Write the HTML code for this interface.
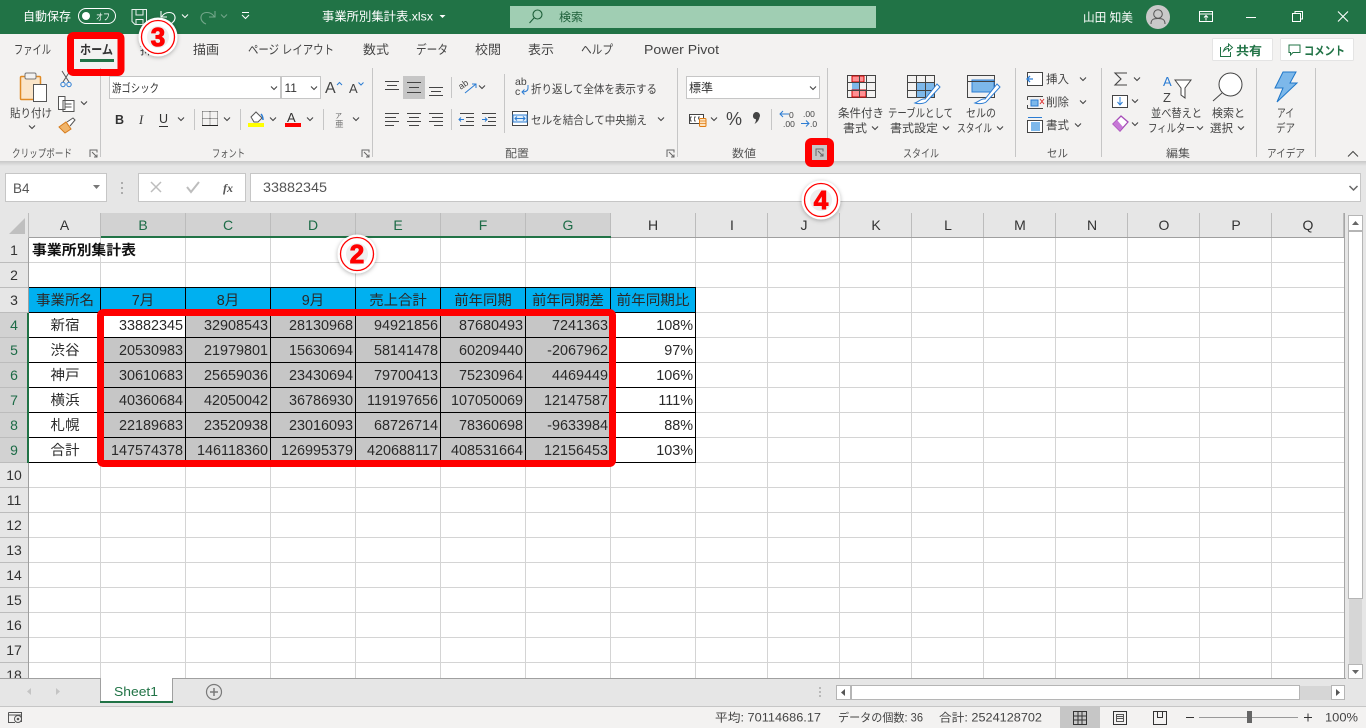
<!DOCTYPE html>
<html lang="ja"><head><meta charset="utf-8"><title>事業所別集計表.xlsx</title>
<style>
html,body{margin:0;padding:0;background:#fff;overflow:hidden;width:1366px;height:728px}
svg{display:block}
text{font-family:"Liberation Sans","Noto Sans CJK JP",sans-serif;fill:#444}
.t{font-size:12px;fill:#fff}
.tab{font-size:12.5px;fill:#444}
.r{font-size:11.5px;fill:#444}
.g{font-size:11px;fill:#555}
.ch{font-size:14px;text-anchor:middle;fill:#333}
.cs{font-size:14px;text-anchor:middle;fill:#1c6b46}
.n{font-size:14.4px;text-anchor:end;fill:#2a2a2a}
.j{font-size:14.4px;text-anchor:middle;fill:#2a2a2a}
.st{font-size:11.5px;fill:#444}
.ann{font-size:26px;font-weight:bold;text-anchor:middle;fill:#f00;stroke:#f00;stroke-width:1}
</style></head><body>
<svg width="1366" height="728" viewBox="0 0 1366 728" xmlns="http://www.w3.org/2000/svg">
<defs>
<path id="chev" d="M-3-1.5L0 1.5L3-1.5" fill="none" stroke="#444" stroke-width="1.1"/>
<g id="lau" fill="none" stroke="#666" stroke-width="1"><path d="M-3.5 3.5V-3.5H3.5V-1M0.5 3.5H3.5V1M-1.5-1.5L3 3"/></g>
<filter id="sh" x="-40%" y="-40%" width="180%" height="180%"><feDropShadow dx="0" dy="1" stdDeviation="2" flood-color="#000" flood-opacity=".3"/></filter>
<linearGradient id="rs" x1="0" y1="0" x2="0" y2="1"><stop offset="0" stop-color="#c8c8c8"/><stop offset="1" stop-color="#e6e6e6"/></linearGradient>
<g id="annc"><circle r="19.5" fill="#fff" filter="url(#sh)"/><circle r="16.5" fill="#fff" stroke="#f00" stroke-width="1.3"/><circle r="11" fill="#eee"/></g>
</defs>

<!-- backgrounds -->
<rect width="1366" height="728" fill="#fff"/>
<rect width="1366" height="34" fill="#217346"/>
<rect y="34" width="1366" height="127" fill="#f3f2f1"/>
<rect y="161" width="1366" height="52" fill="#e6e6e6"/>
<rect y="161" width="1366" height="5" fill="url(#rs)"/>

<!-- title bar -->
<text class="t" x="23" y="20.5" textLength="48" lengthAdjust="spacingAndGlyphs">自動保存</text>
<rect x="78.5" y="8.5" width="37" height="15" rx="7.5" fill="none" stroke="#fff"/>
<circle cx="86" cy="16" r="4" fill="#fff"/>
<text x="96" y="20" style="font-size:9px;fill:#fff" textLength="14" lengthAdjust="spacingAndGlyphs">オフ</text>
<path d="M132 9.5H146.500V24.500H135L132 21.500ZM136 9.500V15H143V9.500M136 24.500V19.500H143V24.500" fill="none" stroke="#fff" opacity=".9"/>
<path d="M161 11V17H167M161.500 17C165 11 174 11 175 17C175.500 20 173 23 170 24" fill="none" stroke="#fff" stroke-width="1.100"/>
<path d="M182 14.500L185 17.500L188 14.500" fill="none" stroke="#fff"/>
<path d="M215 11V17H209M214.500 17C211 11 202 11 201 17C200.500 20 203 23 206 24" fill="none" stroke="#74a78b" stroke-width="1.100"/>
<path d="M221 14.500L224 17.500L227 14.500" fill="none" stroke="#74a78b"/>
<path d="M242 12.500H249M242 15L245.500 18.500L249 15" fill="none" stroke="#fff"/>
<text class="t" x="322" y="20.500" textLength="111" lengthAdjust="spacingAndGlyphs">事業所別集計表.xlsx</text>
<path d="M439.500 15H445.500L442.500 18Z" fill="#fff"/>
<rect x="510" y="6" width="366" height="22" fill="#a0ceb3"/>
<circle cx="537.500" cy="14.500" r="4.500" fill="none" stroke="#1d5f39" stroke-width="1.100"/>
<path d="M534 18L529.500 23" stroke="#1d5f39" stroke-width="1.100"/>
<text x="559" y="21" style="font-size:11.500px;fill:#1d5f39" textLength="24" lengthAdjust="spacingAndGlyphs">検索</text>
<text class="t" x="1083" y="21.500" textLength="50" lengthAdjust="spacingAndGlyphs">山田 知美</text>
<circle cx="1158" cy="17" r="12" fill="#c9c9c9"/>
<circle cx="1158" cy="14" r="4.300" fill="none" stroke="#555"/><path d="M1151 24C1151 19 1154 18.500 1158 18.500S1165 19 1165 24" fill="none" stroke="#555"/>
<path d="M1199.500 11.500H1212.500V21.500H1199.500ZM1199.500 14H1212.500M1206 20.500V15.500M1204 17.500L1206 15.500L1208 17.500" fill="none" stroke="#fff"/>
<path d="M1246 17.500H1256" stroke="#fff"/>
<path d="M1292.500 13.500H1300.500V21.500H1292.500ZM1295 13.500V11.500H1302.500V19H1300.500" fill="none" stroke="#fff"/>
<path d="M1338 11.500L1348 21.500M1348 11.500L1338 21.500" stroke="#fff" stroke-width="1.100"/>

<!-- tabs -->
<text class="tab" x="14" y="54" textLength="37" lengthAdjust="spacingAndGlyphs">ファイル</text>
<text class="tab" x="80" y="54" textLength="33" lengthAdjust="spacingAndGlyphs" style="font-weight:bold;fill:#333">ホーム</text>
<rect x="80" y="59" width="34" height="3" fill="#217346"/>
<text class="tab" x="140" y="54" textLength="26" lengthAdjust="spacingAndGlyphs">挿入</text>
<text class="tab" x="193" y="54" textLength="26" lengthAdjust="spacingAndGlyphs">描画</text>
<text class="tab" x="248" y="54" textLength="86" lengthAdjust="spacingAndGlyphs">ページ レイアウト</text>
<text class="tab" x="363" y="54" textLength="26" lengthAdjust="spacingAndGlyphs">数式</text>
<text class="tab" x="416" y="54" textLength="32" lengthAdjust="spacingAndGlyphs">データ</text>
<text class="tab" x="475" y="54" textLength="26" lengthAdjust="spacingAndGlyphs">校閲</text>
<text class="tab" x="528" y="54" textLength="26" lengthAdjust="spacingAndGlyphs">表示</text>
<text class="tab" x="581" y="54" textLength="32" lengthAdjust="spacingAndGlyphs">ヘルプ</text>
<text class="tab" x="644" y="54" textLength="75" lengthAdjust="spacingAndGlyphs">Power Pivot</text>
<rect x="1212.500" y="38.500" width="60" height="22" rx="1" fill="#fff" stroke="#e4e4e4"/>
<path d="M1220.500 47V56.500H1230.500V52M1223.500 51C1224.500 47.500 1226.500 46.500 1228.500 46.500V44L1232.500 47.500L1228.500 51V48.500C1226.500 48.500 1225 49.500 1223.500 51Z" fill="none" stroke="#217346"/>
<text x="1236" y="55" style="font-size:12px;font-weight:bold;fill:#217346" textLength="26" lengthAdjust="spacingAndGlyphs">共有</text>
<rect x="1280.500" y="38.500" width="73" height="22" rx="1" fill="#fff" stroke="#e4e4e4"/>
<path d="M1289 45H1300V52.500H1293L1290.500 55V52.500H1289Z" fill="none" stroke="#217346"/>
<text x="1304" y="55" style="font-size:12px;font-weight:bold;fill:#217346" textLength="41" lengthAdjust="spacingAndGlyphs">コメント</text>

<!-- group separators -->
<g stroke="#c6c6c6" shape-rendering="crispEdges">
<path d="M100.500 68V157M372.500 68V157M677.500 68V157M827.500 68V157M1015.500 68V157M1101.500 68V157M1256.500 68V157M1315.500 68V157"/>
<path d="M194.500 109V130M240.500 109V130M323.500 109V130M451.500 77V98M451.500 109V130M504.500 74V133M771.500 109V130"/>
</g>

<!-- clipboard -->
<rect x="20.500" y="76.500" width="20" height="23" rx="1" fill="#fbe5c8" stroke="#e08a24" stroke-width="1.500"/>
<rect x="25" y="73" width="11" height="6" rx="1.500" fill="#f3f2f1" stroke="#777"/>
<rect x="33.500" y="84.500" width="13" height="17" fill="#fff" stroke="#555"/>
<text class="r" x="10" y="117" textLength="42" lengthAdjust="spacingAndGlyphs">貼り付け</text>
<use href="#chev" x="32" y="127"/>
<path d="M62 71L69 82M70 71L63 82" stroke="#555" fill="none"/><circle cx="63" cy="84.500" r="2.200" fill="none" stroke="#2b7cd3"/><circle cx="69" cy="84.500" r="2.200" fill="none" stroke="#2b7cd3"/>
<path d="M58.500 96.500H65V109.500H58.500ZM63 100.500H74V111.500H63Z" fill="#fff" stroke="#555"/><path d="M65.500 104H71.500M65.500 107H71.500" stroke="#555"/>
<use href="#chev" x="84" y="103"/>
<path d="M59 127L66 122L71 129L65 133Z" fill="#f0b46a" stroke="#d67b1b"/><path d="M67 122L73 118L75 120L70 126" fill="#fff" stroke="#555"/>
<text class="g" x="12" y="157" textLength="60" lengthAdjust="spacingAndGlyphs">クリップボード</text>
<use href="#lau" x="93.500" y="153.500"/>

<!-- font -->
<rect x="109.500" y="76.500" width="171" height="22" fill="#fff" stroke="#c6c6c6"/>
<rect x="281.500" y="76.500" width="39" height="22" fill="#fff" stroke="#c6c6c6"/>
<text x="112" y="92" style="font-size:11.500px;fill:#333" textLength="47" lengthAdjust="spacingAndGlyphs">游ゴシック</text>
<text x="284.500" y="92" style="font-size:12px;fill:#333">11</text>
<use href="#chev" x="274" y="88"/><use href="#chev" x="314" y="88"/>
<text x="325" y="93" style="font-size:16px;fill:#444">A</text><path d="M337 85L339.500 82.500L342 85" fill="none" stroke="#2b7cd3"/>
<text x="349" y="93" style="font-size:13px;fill:#444">A</text><path d="M358.500 82.500L361 85L363.500 82.500" fill="none" stroke="#2b7cd3"/>
<text x="115" y="124" style="font-size:12.500px;font-weight:bold;fill:#333">B</text>
<text x="139" y="124" style="font-size:12.500px;font-style:italic;fill:#333;font-family:'Liberation Serif',serif">I</text>
<text x="159" y="123" style="font-size:12.500px;fill:#333">U</text><path d="M159 126.500H168" stroke="#333"/>
<use href="#chev" x="181" y="119"/>
<path d="M202.500 111.500H217.500M202.500 125.500H217.500M202.500 111.500V125.500M217.500 111.500V125.500M210 111.500V125.500M202.500 118.500H217.500" stroke="#555" stroke-dasharray="1 1" fill="none"/><path d="M202 125.500H218" stroke="#222"/>
<use href="#chev" x="227" y="119"/>
<path d="M251 117L256 112L262 118L258 122H254Z" fill="#fff" stroke="#555"/><path d="M261 114C263 116 263 118 263 120" stroke="#2b7cd3" fill="none" stroke-width="1.500"/>
<rect x="248" y="123" width="16" height="4" fill="#ff0"/>
<use href="#chev" x="273" y="119"/>
<text x="287" y="122" style="font-size:13px;fill:#333">A</text>
<rect x="285" y="123" width="16" height="4" fill="#f00"/>
<use href="#chev" x="310" y="119"/>
<text x="335" y="118" style="font-size:7px;fill:#666">ア</text><text x="335" y="127" style="font-size:8.500px;fill:#777">亜</text>
<use href="#chev" x="356" y="119"/>
<text class="g" x="212" y="157" textLength="33" lengthAdjust="spacingAndGlyphs">フォント</text>
<use href="#lau" x="365.500" y="153.500"/>

<!-- alignment -->
<rect x="403" y="76" width="22" height="23" fill="#c6c6c6"/>
<g stroke="#444" shape-rendering="crispEdges">
<path d="M385 81.500H399M387 85.500H397M385 89.500H399" />
<path d="M407 82.500H421M409 87.500H419M407 92.500H421"/>
<path d="M429 87.500H443M431 91.500H441M429 95.500H443"/>
<path d="M385 113.500H399M385 117.500H396M385 121.500H399M385 125.500H394"/>
<path d="M407 113.500H421M409 117.500H419M407 121.500H421M409 125.500H419"/>
<path d="M429 113.500H443M432 117.500H443M429 121.500H443M434 125.500H443"/>
<path d="M460 113.500H474M466 117.500H474M466 121.500H474M460 125.500H474"/>
<path d="M482 113.500H496M488 117.500H496M488 121.500H496M482 125.500H496"/>
</g>
<path d="M464 119.500H459M461 117.500L459 119.500L461 121.500M482 119.500H487M485 117.500L487 119.500L485 121.500" fill="none" stroke="#2b7cd3"/>
<text x="459" y="88" style="font-size:9px;fill:#444" transform="rotate(-35 463 86)">ab</text>
<path d="M465 93L476 84M472 84H476V88" fill="none" stroke="#2b7cd3"/>
<use href="#chev" x="482" y="87"/>
<text x="515" y="85" style="font-size:10.500px;fill:#444">ab</text><text x="515" y="95" style="font-size:10.500px;fill:#444">c</text>
<path d="M528 85V88C528 91 525 92 522 92M524.500 89.500L522 92L524.500 94.500" fill="none" stroke="#2b7cd3"/>
<text class="r" x="531" y="93" textLength="126" lengthAdjust="spacingAndGlyphs">折り返して全体を表示する</text>
<rect x="512.500" y="111.500" width="15" height="14" fill="#fff" stroke="#444"/><rect x="513" y="115" width="14" height="7" fill="#e0eefa" stroke="#2b7cd3"/>
<path d="M515 118.500H525M517 116.500L515 118.500L517 120.500M523 116.500L525 118.500L523 120.500" fill="none" stroke="#2b7cd3"/>
<text class="r" x="531" y="124" textLength="116" lengthAdjust="spacingAndGlyphs">セルを結合して中央揃え</text>
<use href="#chev" x="661" y="119"/>
<text class="g" x="505" y="157" textLength="24" lengthAdjust="spacingAndGlyphs">配置</text>
<use href="#lau" x="670.500" y="153.500"/>

<!-- number -->
<rect x="686.500" y="76.500" width="133" height="22" fill="#fff" stroke="#c6c6c6"/>
<text x="689" y="92" style="font-size:12px;fill:#333" textLength="24" lengthAdjust="spacingAndGlyphs">標準</text>
<use href="#chev" x="813" y="88"/>
<rect x="689.500" y="114.500" width="14" height="9" fill="#fff" stroke="#444"/>
<path d="M692 117H690.500V121H692M696 117H694.500V121H696M700 117H698.500V119H700" fill="none" stroke="#444" stroke-width=".8"/>
<rect x="699.500" y="118.500" width="6.500" height="8" rx="1" fill="#fde3c0" stroke="#e07c12"/>
<path d="M700 121H706M700 123.500H706" stroke="#e07c12" stroke-width=".8"/>
<use href="#chev" x="714" y="119"/>
<text x="726" y="125" style="font-size:18px;fill:#444">%</text>
<path d="M753 115.500a3.500 3.500 0 1 1 6.500 1.800c-.4 2.800-2.400 5.400-5 6.700c1-1.700 1.500-3.200 1.500-4.800c-2 0-3.300-1.700-3-3.700z" fill="#444"/>
<path d="M780 114H789M783 111L780 114L783 117" fill="none" stroke="#2b7cd3"/>
<text x="789" y="118" style="font-size:8.500px;fill:#444">0</text><text x="783" y="127" style="font-size:8.500px;fill:#444">.00</text>
<text x="803" y="117" style="font-size:8.500px;fill:#444">.00</text><text x="810" y="127" style="font-size:8.500px;fill:#444">.0</text>
<path d="M801 123.500H809M806 120.500L809 123.500L806 126.500" fill="none" stroke="#2b7cd3"/>
<text class="g" x="732" y="157" textLength="24" lengthAdjust="spacingAndGlyphs">数値</text>

<!-- styles -->
<g fill="none" stroke="#444" shape-rendering="crispEdges">
<rect x="847.500" y="75.500" width="28" height="22"/>
<rect x="907.500" y="75.500" width="27" height="22"/>
<rect x="967.500" y="75.500" width="27" height="22"/>
</g>
<rect x="852" y="76" width="12" height="6" fill="#ff8f92" stroke="#c00"/><rect x="852" y="83" width="7" height="7" fill="#7db8ea"/>
<rect x="852" y="90" width="14" height="7" fill="#ff8f92" stroke="#c00"/>
<path d="M847 82.500H875M847 90.500H875M859.500 76V97M866.500 76V97" stroke="#444" fill="none"/>
<rect x="916" y="83" width="18" height="14" fill="#7db8ea"/>
<path d="M907 82.500H935M907 90.500H935M916.500 76V97M925.500 76V97" stroke="#444" fill="none"/>
<path d="M937 84L925 99C922 98 918 102 915 103C918 104 925 104 927 101L940 87Z" fill="#fff" stroke="#2b7cd3"/>
<rect x="972" y="80" width="22" height="12" fill="#7db8ea" stroke="#2b7cd3"/>
<path d="M967 81.500H995" stroke="#444"/>
<path d="M997 84L985 99C982 98 978 102 975 103C978 104 985 104 987 101L1000 87Z" fill="#fff" stroke="#2b7cd3"/>
<text class="r" x="838" y="117" textLength="46" lengthAdjust="spacingAndGlyphs">条件付き</text>
<text class="r" x="843" y="132" textLength="24" lengthAdjust="spacingAndGlyphs">書式</text><use href="#chev" x="875" y="128"/>
<text class="r" x="888" y="117" textLength="65" lengthAdjust="spacingAndGlyphs">テーブルとして</text>
<text class="r" x="890" y="132" textLength="48" lengthAdjust="spacingAndGlyphs">書式設定</text><use href="#chev" x="946" y="128"/>
<text class="r" x="966" y="117" textLength="30" lengthAdjust="spacingAndGlyphs">セルの</text>
<text class="r" x="957" y="132" textLength="35" lengthAdjust="spacingAndGlyphs">スタイル</text><use href="#chev" x="1000" y="128"/>
<text class="g" x="903" y="157" textLength="36" lengthAdjust="spacingAndGlyphs">スタイル</text>

<!-- cells -->
<rect x="1027.500" y="72.500" width="15" height="13" fill="#fff" stroke="#444"/><path d="M1033 79H1027M1030 76L1027 79L1030 82" stroke="#2b7cd3" fill="none" stroke-width="1.300"/>
<text class="r" x="1046" y="83" textLength="23" lengthAdjust="spacingAndGlyphs">挿入</text><use href="#chev" x="1083" y="79"/>
<path d="M1027.500 96.500H1043M1027.500 108.500H1043M1027.500 96.500V100M1027.500 105V108.500" fill="none" stroke="#444"/><rect x="1031" y="100" width="7" height="6" fill="#7db8ea" stroke="#2b7cd3"/><path d="M1040 99L1044 104M1044 99L1040 104" stroke="#e03030"/>
<text class="r" x="1046" y="106" textLength="23" lengthAdjust="spacingAndGlyphs">削除</text><use href="#chev" x="1083" y="102"/>
<rect x="1027.500" y="120.500" width="15" height="12" fill="#fff" stroke="#444"/><rect x="1031" y="122" width="9" height="9" fill="#7db8ea"/><path d="M1028 117.500H1042" stroke="#2b7cd3"/>
<text class="r" x="1046" y="129" textLength="23" lengthAdjust="spacingAndGlyphs">書式</text><use href="#chev" x="1078" y="125"/>
<text class="g" x="1047" y="157" textLength="21" lengthAdjust="spacingAndGlyphs">セル</text>

<!-- edit -->
<path d="M1127 73H1115L1121 79L1115 85H1127" fill="none" stroke="#444" stroke-width="1.100"/><use href="#chev" x="1137" y="79"/>
<rect x="1112.500" y="95.500" width="15" height="12" fill="#fff" stroke="#444"/><path d="M1120 97V104M1117.500 102L1120 105L1122.500 102" fill="none" stroke="#2b7cd3"/><use href="#chev" x="1135" y="101"/>
<path d="M1113 124L1121 116L1128 122L1120 131Z" fill="#fff" stroke="#a64cb8" stroke-width="1.300"/><path d="M1113 124L1117 120L1123 127L1120 131Z" fill="#c678d6"/><use href="#chev" x="1135" y="124"/>
<text x="1163" y="86" style="font-size:13px;fill:#2b7cd3">A</text><text x="1163" y="102" style="font-size:13px;fill:#444">Z</text>
<path d="M1175 80H1191L1185 88V98L1181 95V88Z" fill="#fff" stroke="#444"/>
<text class="r" x="1151" y="117" textLength="51" lengthAdjust="spacingAndGlyphs">並べ替えと</text>
<text class="r" x="1148" y="132" textLength="47" lengthAdjust="spacingAndGlyphs">フィルター</text><use href="#chev" x="1200" y="128"/>
<circle cx="1230.500" cy="84.500" r="11.500" fill="#fff" stroke="#444"/><path d="M1222 93L1213 101" stroke="#444"/>
<text class="r" x="1212" y="117" textLength="33" lengthAdjust="spacingAndGlyphs">検索と</text>
<text class="r" x="1210" y="132" textLength="23" lengthAdjust="spacingAndGlyphs">選択</text><use href="#chev" x="1241" y="128"/>
<text class="g" x="1166" y="157" textLength="24" lengthAdjust="spacingAndGlyphs">編集</text>

<!-- ideas -->
<path d="M1283 72H1296L1290 83H1297L1277 102L1283 88H1275Z" fill="#7db8ea" stroke="#1f77c9"/>
<text class="r" x="1277" y="117" textLength="17" lengthAdjust="spacingAndGlyphs">アイ</text>
<text class="r" x="1276" y="132" textLength="19" lengthAdjust="spacingAndGlyphs">デア</text>
<text class="g" x="1267" y="157" textLength="38" lengthAdjust="spacingAndGlyphs">アイデア</text>
<path d="M1348 156.500L1353 151.500L1358 156.500" fill="none" stroke="#444"/>

<!-- formula bar -->
<rect x="5.500" y="173.500" width="101" height="28" fill="#fff" stroke="#c6c6c6"/>
<text x="13" y="193" style="font-size:13.500px;fill:#555">B4</text>
<path d="M93 185H100L96.500 189Z" fill="#777"/>
<path d="M122 182v2M122 187v2M122 192v2" stroke="#999" stroke-width="1.500"/>
<rect x="138.500" y="173.500" width="107" height="28" fill="#fff" stroke="#c6c6c6"/>
<path d="M151 182L161 192M161 182L151 192" stroke="#bdbdbd" stroke-width="1.500"/>
<path d="M187 187L191 192L199 182" fill="none" stroke="#bdbdbd" stroke-width="2"/>
<text x="223" y="192" style="font-size:12px;font-style:italic;font-weight:bold;fill:#555;font-family:'Liberation Serif',serif">fx</text>
<rect x="250.500" y="173.500" width="1110" height="28" fill="#fff" stroke="#c6c6c6"/>
<text x="263" y="192" style="font-size:13.500px;fill:#555" textLength="64" lengthAdjust="spacingAndGlyphs">33882345</text>
<path d="M1349.500 186L1353.500 190L1357.500 186" fill="none" stroke="#666" stroke-width="1.500"/>

<!-- grid headers -->
<rect y="213" width="1345" height="25" fill="#e6e6e6"/>
<rect y="238" width="28" height="441" fill="#e6e6e6"/>
<path d="M25 218V234H9Z" fill="#bfbfbf"/>
<rect x="101" y="213" width="510" height="24" fill="#d2d2d2"/>
<rect y="313" width="28" height="150" fill="#d2d2d2"/>
<g shape-rendering="crispEdges" fill="none">
<path d="M28.500 213V238M100.500 213V237M185.500 213V237M270.500 213V237M355.500 213V237M440.500 213V237M525.500 213V237M610.500 213V237M695.500 213V237M767.500 213V237M839.500 213V237M911.500 213V237M983.500 213V237M1055.500 213V237M1127.500 213V237M1199.500 213V237M1271.500 213V237M1343.500 213V237" stroke="#bcbcbc"/>
<path d="M0 262.500H28M0 287.500H28M0 312.500H28M0 337.500H28M0 362.500H28M0 387.500H28M0 412.500H28M0 437.500H28M0 462.500H28M0 487.500H28M0 512.500H28M0 537.500H28M0 562.500H28M0 587.500H28M0 612.500H28M0 637.500H28M0 662.500H28" stroke="#bcbcbc"/>
<path d="M28.500 238V678" stroke="#9f9f9f"/>
<path d="M29 237.500H1344" stroke="#9f9f9f"/>
<!-- gridlines -->
<path d="M100.500 238V679M185.500 238V679M270.500 238V679M355.500 238V679M440.500 238V679M525.500 238V679M610.500 238V679M695.500 238V679M767.500 238V679M839.500 238V679M911.500 238V679M983.500 238V679M1055.500 238V679M1127.500 238V679M1199.500 238V679M1271.500 238V679" stroke="#d4d4d4"/>
<path d="M29 262.500H1344M29 287.500H1344M29 312.500H1344M29 337.500H1344M29 362.500H1344M29 387.500H1344M29 412.500H1344M29 437.500H1344M29 462.500H1344M29 487.500H1344M29 512.500H1344M29 537.500H1344M29 562.500H1344M29 587.500H1344M29 612.500H1344M29 637.500H1344M29 662.500H1344" stroke="#d4d4d4"/>
<path d="M1344.500 213V679" stroke="#a6a6a6"/>
</g>
<!-- column labels -->
<text class="ch" x="64.500" y="230">A</text><text class="cs" x="143" y="230">B</text><text class="cs" x="228" y="230">C</text><text class="cs" x="313" y="230">D</text><text class="cs" x="398" y="230">E</text><text class="cs" x="483" y="230">F</text><text class="cs" x="568" y="230">G</text><text class="ch" x="653" y="230">H</text><text class="ch" x="732" y="230">I</text><text class="ch" x="804" y="230">J</text><text class="ch" x="876" y="230">K</text><text class="ch" x="948" y="230">L</text><text class="ch" x="1020" y="230">M</text><text class="ch" x="1092" y="230">N</text><text class="ch" x="1164" y="230">O</text><text class="ch" x="1236" y="230">P</text><text class="ch" x="1308" y="230">Q</text>
<!-- row labels -->
<text class="ch" x="14" y="255">1</text><text class="ch" x="14" y="280">2</text><text class="ch" x="14" y="305">3</text><text class="cs" x="14" y="330">4</text><text class="cs" x="14" y="355">5</text><text class="cs" x="14" y="380">6</text><text class="cs" x="14" y="405">7</text><text class="cs" x="14" y="430">8</text><text class="cs" x="14" y="455">9</text><text class="ch" x="14" y="480">10</text><text class="ch" x="14" y="505">11</text><text class="ch" x="14" y="530">12</text><text class="ch" x="14" y="555">13</text><text class="ch" x="14" y="580">14</text><text class="ch" x="14" y="605">15</text><text class="ch" x="14" y="630">16</text><text class="ch" x="14" y="655">17</text><text class="ch" x="14" y="680">18</text>

<!-- table -->
<rect x="29" y="288" width="667" height="25" fill="#00b0f0"/>
<rect x="101" y="313" width="510" height="150" fill="#c6c6c6"/>
<rect x="101" y="313" width="84" height="24" fill="#fff"/>
<g shape-rendering="crispEdges" fill="none">
<path d="M29 287.500H696M29 312.500H696M29 337.500H696M29 362.500H696M29 387.500H696M29 412.500H696M29 437.500H696M29 462.500H696M100.500 288V462M185.500 288V462M270.500 288V462M355.500 288V462M440.500 288V462M525.500 288V462M610.500 288V462M695.500 287V463" stroke="#000"/>
<path d="M28.500 313V463" stroke="#217346" stroke-width="1"/><path d="M27.500 313V463" stroke="#217346"/>
<path d="M101 236.500H611M101 237.500H611" stroke="#217346"/>
</g>
<text x="32" y="255" style="font-size:14.400px;font-weight:bold;fill:#111" textLength="104" lengthAdjust="spacingAndGlyphs">事業所別集計表</text>
<text class="j" x="65" y="305" textLength="58" lengthAdjust="spacingAndGlyphs">事業所名</text><text class="j" x="143" y="305">7月</text><text class="j" x="228" y="305">8月</text><text class="j" x="313" y="305">9月</text><text class="j" x="398" y="305">売上合計</text><text class="j" x="483" y="305">前年同期</text><text class="j" x="568" y="305">前年同期差</text><text class="j" x="653" y="305" textLength="73" lengthAdjust="spacingAndGlyphs">前年同期比</text>
<text class="j" x="65" y="330" textLength="29">新宿</text><text class="j" x="65" y="355" textLength="29">渋谷</text><text class="j" x="65" y="380" textLength="29">神戸</text><text class="j" x="65" y="405" textLength="29">横浜</text><text class="j" x="65" y="430" textLength="29">札幌</text><text class="j" x="65" y="455" textLength="29">合計</text>

<text class="n" x="183" y="330">33882345</text><text class="n" x="268" y="330">32908543</text><text class="n" x="353" y="330">28130968</text><text class="n" x="438" y="330">94921856</text><text class="n" x="523" y="330">87680493</text><text class="n" x="608" y="330">7241363</text><text class="n" x="693" y="330">108%</text>
<text class="n" x="183" y="355">20530983</text><text class="n" x="268" y="355">21979801</text><text class="n" x="353" y="355">15630694</text><text class="n" x="438" y="355">58141478</text><text class="n" x="523" y="355">60209440</text><text class="n" x="608" y="355">-2067962</text><text class="n" x="693" y="355">97%</text>
<text class="n" x="183" y="380">30610683</text><text class="n" x="268" y="380">25659036</text><text class="n" x="353" y="380">23430694</text><text class="n" x="438" y="380">79700413</text><text class="n" x="523" y="380">75230964</text><text class="n" x="608" y="380">4469449</text><text class="n" x="693" y="380">106%</text>
<text class="n" x="183" y="405">40360684</text><text class="n" x="268" y="405">42050042</text><text class="n" x="353" y="405">36786930</text><text class="n" x="438" y="405">119197656</text><text class="n" x="523" y="405">107050069</text><text class="n" x="608" y="405">12147587</text><text class="n" x="693" y="405">111%</text>
<text class="n" x="183" y="430">22189683</text><text class="n" x="268" y="430">23520938</text><text class="n" x="353" y="430">23016093</text><text class="n" x="438" y="430">68726714</text><text class="n" x="523" y="430">78360698</text><text class="n" x="608" y="430">-9633984</text><text class="n" x="693" y="430">88%</text>
<text class="n" x="183" y="455">147574378</text><text class="n" x="268" y="455">146118360</text><text class="n" x="353" y="455">126995379</text><text class="n" x="438" y="455">420688117</text><text class="n" x="523" y="455">408531664</text><text class="n" x="608" y="455">12156453</text><text class="n" x="693" y="455">103%</text>

<!-- vertical scrollbar -->
<rect x="1345" y="213" width="21" height="466" fill="#e6e6e6"/>
<g shape-rendering="crispEdges">
<rect x="1348.500" y="215.500" width="14" height="15" fill="#fff" stroke="#b5b5b5"/>
<rect x="1348.500" y="231.500" width="14" height="367" fill="#fff" stroke="#b5b5b5"/>
<rect x="1349" y="599" width="13" height="65" fill="#d6d6d6"/>
<rect x="1348.500" y="664.500" width="14" height="14" fill="#fff" stroke="#b5b5b5"/>
</g>
<path d="M1352 225H1359L1355.500 221Z" fill="#666"/>
<path d="M1352 670H1359L1355.500 674Z" fill="#666"/>

<!-- sheet tab bar -->
<rect y="679" width="1366" height="28" fill="#e6e6e6"/>
<rect y="678" width="1346" height="1" fill="#a0a0a0"/>
<rect x="100" y="678" width="73" height="25" fill="#fff"/>
<path d="M100.500 678V702M172.500 678V702" stroke="#a0a0a0" shape-rendering="crispEdges"/>
<rect x="100" y="701" width="73" height="2" fill="#217346"/>
<text x="114" y="696" style="font-size:13px;fill:#217346" textLength="44" lengthAdjust="spacingAndGlyphs">Sheet1</text>
<path d="M31 688V695L27 691.500Z" fill="#c4c4c4"/><path d="M56 688V695L60 691.500Z" fill="#c4c4c4"/>
<circle cx="214" cy="692" r="7.500" fill="none" stroke="#7a7a7a" stroke-width="1.200"/><path d="M210 692H218M214 688V696" stroke="#7a7a7a" stroke-width="1.500"/>
<path d="M820 687v2M820 691v2M820 695v2" stroke="#aaa" stroke-width="1.500"/>
<g shape-rendering="crispEdges">
<rect x="836.500" y="685.500" width="14" height="14" fill="#fff" stroke="#b5b5b5"/>
<rect x="851.500" y="685.500" width="448" height="14" fill="#fff" stroke="#b5b5b5"/>
<rect x="1300" y="686" width="31" height="14" fill="#d6d6d6"/>
<rect x="1331.500" y="685.500" width="13" height="14" fill="#fff" stroke="#b5b5b5"/>
</g>
<path d="M845 689V696L841 692.500Z" fill="#555"/><path d="M1336 689V696L1340 692.500Z" fill="#555"/>

<!-- status bar -->
<rect y="706" width="1366" height="22" fill="#f3f2f1"/>
<rect y="706" width="1366" height="1" fill="#c6c6c6"/>
<path d="M8.500 712.500H21.500V722M8.500 712.500V722.500H15M8.500 715H21.500" fill="none" stroke="#555"/><circle cx="18" cy="719" r="3.500" fill="#f3f2f1" stroke="#555"/><circle cx="18" cy="719" r="1.300" fill="#555"/>
<text class="st" x="715" y="721.500" textLength="106" lengthAdjust="spacingAndGlyphs">平均: 70114686.17</text>
<text class="st" x="838" y="721.500" textLength="85" lengthAdjust="spacingAndGlyphs">データの個数: 36</text>
<text class="st" x="939" y="721.500" textLength="103" lengthAdjust="spacingAndGlyphs">合計: 2524128702</text>
<rect x="1060" y="707" width="40" height="21" fill="#c6c6c6"/>
<g fill="none" stroke="#333" shape-rendering="crispEdges">
<path d="M1073.500 711.500H1086.500V724.500H1073.500ZM1073.500 716H1086.500M1073.500 720H1086.500M1078 711.500V724.500M1082 711.500V724.500"/>
<path d="M1113.500 711.500H1126.500V724.500H1113.500Z"/><path d="M1116.500 714.500H1123.500V721.500H1116.500ZM1117 716.500H1123M1117 718.500H1123" stroke="#555"/>
<path d="M1153.500 711.500V724.500H1166.500V711.500ZM1157.500 711.500V717.500H1162.500V711.500" />
<path d="M1186 717.500H1194M1304 717.500H1312M1308 713.500V721.500"/>
<path d="M1199 717.500H1298" stroke="#999"/>
</g>
<rect x="1247" y="711" width="5" height="12" fill="#666"/>
<text class="st" x="1325" y="721.500" textLength="33" lengthAdjust="spacingAndGlyphs">100%</text>

<!-- red annotations -->
<rect x="70.500" y="35.500" width="50.500" height="37" rx="3" fill="none" stroke="#f00" stroke-width="7"/>
<rect x="812" y="145" width="15" height="15" fill="#c6c6c6"/>
<rect x="808.500" y="141.500" width="22" height="22" rx="3" fill="none" stroke="#f00" stroke-width="7"/>
<use href="#lau" x="819.500" y="152.500"/>
<rect x="100.500" y="312.500" width="512" height="151" rx="3" fill="none" stroke="#f00" stroke-width="7"/>

<use href="#annc" x="158" y="37"/><text class="ann" x="158" y="46">3</text>
<use href="#annc" x="357" y="254"/><text class="ann" x="357" y="263">2</text>
<use href="#annc" x="821" y="200"/><text class="ann" x="821" y="209">4</text>
</svg>
</body></html>
